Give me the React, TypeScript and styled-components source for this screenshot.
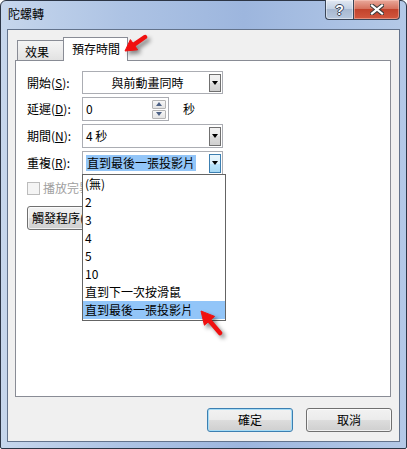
import React from "react";
import styled, { createGlobalStyle, css } from "styled-components";

const FONT = `"Noto Sans CJK TC", "Noto Sans", "Liberation Sans", sans-serif`;

const GlobalStyle = createGlobalStyle`
  html, body { margin: 0; padding: 0; background: #ffffff; }
  body { font-family: ${FONT}; font-size: 12px; color: #000; }
  * { box-sizing: border-box; }
`;

const Window = styled.div`
  position: relative;
  width: 407px;
  height: 449px;
  border: 1px solid #2c3545;
  border-radius: 6px 6px 2px 2px;
  background: linear-gradient(to right, #c6d6ec 0%, #adc3e4 30%, #9db6de 60%, #b4c9e7 100%);
  display: flex;
  flex-direction: column;
  padding: 0 6px 6px;
  font-family: ${FONT};
  font-size: 12px;
`;

const TitleBar = styled.div`
  height: 28px;
  margin: 0 -6px;
  padding: 0 6px 2px 7px;
  display: flex;
  align-items: center;
`;

const TitleText = styled.span`
  line-height: 16px;
  color: #000;
`;

const CaptionButtons = styled.div`
  margin-left: auto;
  align-self: flex-start;
  margin-top: -1px;
  display: flex;
`;

const CaptionButton = styled.div<{ $kind: "help" | "close" }>`
  height: 20px;
  border: 1px solid #3a4658;
  border-top: none;
  display: flex;
  align-items: center;
  justify-content: center;
  ${(p) =>
    p.$kind === "help"
      ? css`
          width: 28px;
          border-radius: 0 0 0 4px;
          border-right: none;
          background: linear-gradient(#e2e9f3 0%, #c3d1e3 45%, #a7b8d0 50%, #b7c8de 100%);
          box-shadow: inset 0 0 0 1px rgba(255, 255, 255, 0.45);
        `
      : css`
          width: 47px;
          border-radius: 0 0 4px 0;
          background: linear-gradient(#e9a99b 0%, #d6735f 45%, #c2432c 50%, #d2573e 100%);
          box-shadow: inset 0 0 0 1px rgba(255, 210, 200, 0.45);
        `}
`;

const HelpGlyph = styled.span`
  font-family: "Liberation Sans", sans-serif;
  font-weight: bold;
  font-size: 14px;
  line-height: 14px;
  color: #fff;
  text-shadow: 1px 0 0 #3a4658, -1px 0 0 #3a4658, 0 1px 0 #3a4658, 0 -1px 0 #3a4658;
`;

const Client = styled.div`
  height: 413px;
  border: 1px solid #63738c;
  background: #f0f0f0;
  padding: 7px 7px 0 7px;
  display: flex;
  flex-direction: column;
`;

const TabStrip = styled.div`
  display: flex;
  align-items: flex-end;
  height: 23px;
  padding-left: 2px;
  position: relative;
  z-index: 2;
`;

const Tab = styled.div<{ $active?: boolean }>`
  border: 1px solid #898c95;
  border-bottom: none;
  padding-left: 7px;
  line-height: 16px;
  display: flex;
  align-items: center;
  ${(p) =>
    p.$active
      ? css`
          width: 65px;
          height: 24px;
          margin-left: -1px;
          margin-bottom: -1px;
          background: #ffffff;
          padding-left: 8px;
          padding-bottom: 2px;
        `
      : css`
          width: 47px;
          height: 20px;
          background: linear-gradient(#f4f4f4 0%, #ececec 50%, #e2e2e2 100%);
          padding-top: 2px;
        `}
`;

const Panel = styled.div`
  position: relative;
  width: 376px;
  height: 337px;
  border: 1px solid #898c95;
  background: #ffffff;
  padding: 10px 0 0 11px;
  display: flex;
  flex-direction: column;
`;

const FormGrid = styled.div`
  display: grid;
  grid-template-columns: 55px auto;
  grid-template-rows: 23px 24px 24px 24px;
  row-gap: 3px;
  align-items: center;
`;

const Label = styled.span`
  line-height: 16px;
  white-space: nowrap;
`;

const Combo = styled.div<{ $center?: boolean }>`
  width: 141px;
  height: 100%;
  border: 1px solid #abadb3;
  background: #fff;
  display: flex;
  align-items: center;
  padding-left: 3px;
`;

const ComboText = styled.span<{ $center?: boolean; $selected?: boolean }>`
  flex: 1;
  line-height: 16px;
  white-space: nowrap;
  ${(p) => p.$center && css`text-align: center;`}
  ${(p) =>
    p.$selected &&
    css`
      flex: 0 0 auto;
      margin-right: auto;
      background: #92c5f8;
      padding: 0 1px;
    `}
`;

const DropButton = styled.div<{ $focused?: boolean }>`
  width: 12px;
  height: calc(100% - 3px);
  margin-right: 1px;
  border: 1px solid ${(p) => (p.$focused ? "#3c7fb1" : "#707070")};
  background: ${(p) =>
    p.$focused
      ? "linear-gradient(#eaf6fd 0%, #d9f0fc 50%, #bee6fd 50%, #a7d9f5 100%)"
      : "linear-gradient(#f2f2f2 0%, #ebebeb 50%, #dddddd 50%, #cfcfcf 100%)"};
  display: flex;
  align-items: center;
  justify-content: center;
`;

const Caret = styled.span<{ $up?: boolean; $color?: string }>`
  width: 0;
  height: 0;
  border-left: 3.5px solid transparent;
  border-right: 3.5px solid transparent;
  ${(p) =>
    p.$up
      ? css`border-bottom: 4px solid ${p.$color || "#000"};`
      : css`border-top: 4px solid ${p.$color || "#000"};`}
`;

const SpinRow = styled.div`
  display: flex;
  align-items: center;
  height: 100%;
`;

const Spinner = styled.div`
  width: 87px;
  height: 100%;
  border: 1px solid #abadb3;
  background: #fff;
  display: flex;
  align-items: center;
  padding-left: 3px;
`;

const SpinButtons = styled.div`
  display: flex;
  flex-direction: column;
  gap: 1px;
  margin-right: 2px;
`;

const SpinButton = styled.div`
  width: 14px;
  height: 9px;
  border: 1px solid #b4b4b4;
  border-radius: 1px;
  background: linear-gradient(#f7f7f7, #e4e4e4);
  display: flex;
  align-items: center;
  justify-content: center;
`;

const Unit = styled.span`
  margin-left: 14px;
  line-height: 16px;
`;

const CheckRow = styled.div`
  margin-top: 5px;
  display: flex;
  align-items: center;
  gap: 3px;
  color: #a0a0a0;
  line-height: 16px;
  white-space: nowrap;
`;

const CheckBox = styled.span`
  width: 13px;
  height: 13px;
  border: 1px solid #bcbcbc;
  background: #f4f4f4;
`;

const PushButton = styled.button<{ $primary?: boolean; $width: number }>`
  width: ${(p) => p.$width}px;
  height: 24px;
  border: 1px solid ${(p) => (p.$primary ? "#3c7fb1" : "#707070")};
  border-radius: 3px;
  background: linear-gradient(#f2f2f2 0%, #ebebeb 50%, #dddddd 50%, #cfcfcf 100%);
  box-shadow: inset 0 0 0 1px ${(p) => (p.$primary ? "#a6dcf6" : "rgba(255,255,255,0.7)")};
  font-family: ${FONT};
  font-size: 12px;
  line-height: 16px;
  color: #000;
  padding: 0;
  margin: 0;
`;

const TriggerButton = styled(PushButton)`
  margin-top: 10px;
  text-align: left;
  padding-left: 4px;
  white-space: nowrap;
`;

const DropList = styled.div`
  position: absolute;
  left: 66px;
  top: 113px;
  width: 144px;
  height: 147px;
  border: 1px solid #646464;
  background: #fff;
  z-index: 5;
`;

const ListItem = styled.div<{ $selected?: boolean }>`
  height: 18px;
  line-height: 18px;
  padding-left: 2px;
  white-space: nowrap;
  background: ${(p) => (p.$selected ? "#92c5f8" : "transparent")};
`;

const ButtonRow = styled.div`
  margin-top: 11px;
  display: flex;
  justify-content: flex-end;
  gap: 13px;
`;

const ArrowMark = styled.svg<{ $left: number; $top: number }>`
  position: absolute;
  left: ${(p) => p.$left}px;
  top: ${(p) => p.$top}px;
  overflow: visible;
  filter: drop-shadow(3px 3px 2px rgba(0, 0, 0, 0.45));
  z-index: 10;
`;

const items = ["(無)", "2", "3", "4", "5", "10", "直到下一次按滑鼠", "直到最後一張投影片"];

export default function App() {
  return (
    <>
      <GlobalStyle />
      <Window>
        <TitleBar>
          <TitleText>陀螺轉</TitleText>
          <CaptionButtons>
            <CaptionButton $kind="help">
              <HelpGlyph>?</HelpGlyph>
            </CaptionButton>
            <CaptionButton $kind="close">
              <svg width="14" height="11" viewBox="0 0 14 11">
                <path d="M2 1.5 L12 9.5 M12 1.5 L2 9.5" stroke="#3a3a3a" strokeWidth="4.2" strokeLinecap="square" />
                <path d="M2 1.5 L12 9.5 M12 1.5 L2 9.5" stroke="#ffffff" strokeWidth="2.2" strokeLinecap="square" />
              </svg>
            </CaptionButton>
          </CaptionButtons>
        </TitleBar>
        <Client>
          <TabStrip>
            <Tab>效果</Tab>
            <Tab $active>預存時間</Tab>
          </TabStrip>
          <Panel>
            <FormGrid>
              <Label>
                開始(<u>S</u>):
              </Label>
              <Combo>
                <ComboText $center>與前動畫同時</ComboText>
                <DropButton>
                  <Caret />
                </DropButton>
              </Combo>
              <Label>
                延遲(<u>D</u>):
              </Label>
              <SpinRow>
                <Spinner>
                  <ComboText>0</ComboText>
                  <SpinButtons>
                    <SpinButton>
                      <Caret $up $color="#4d6185" />
                    </SpinButton>
                    <SpinButton>
                      <Caret $color="#4d6185" />
                    </SpinButton>
                  </SpinButtons>
                </Spinner>
                <Unit>秒</Unit>
              </SpinRow>
              <Label>
                期間(<u>N</u>):
              </Label>
              <Combo>
                <ComboText>4 秒</ComboText>
                <DropButton>
                  <Caret />
                </DropButton>
              </Combo>
              <Label>
                重複(<u>R</u>):
              </Label>
              <Combo>
                <ComboText $selected>直到最後一張投影片</ComboText>
                <DropButton $focused>
                  <Caret />
                </DropButton>
              </Combo>
            </FormGrid>
            <CheckRow>
              <CheckBox />
              <span>播放完畢後倒帶(W)</span>
            </CheckRow>
            <TriggerButton $width={100}>觸發程序(T)</TriggerButton>
            <DropList>
              {items.map((t, i) => (
                <ListItem key={t} $selected={i === items.length - 1}>
                  {t}
                </ListItem>
              ))}
            </DropList>
          </Panel>
          <ButtonRow>
            <PushButton $primary $width={86}>
              確定
            </PushButton>
            <PushButton $width={86}>取消</PushButton>
          </ButtonRow>
        </Client>
        <ArrowMark $left={117} $top={29} width="36" height="30" viewBox="0 0 36 30">
          <path d="M27 7 L16 14.7" stroke="#f01010" strokeWidth="4.5" strokeLinecap="round" />
          <path d="M7 21 L19.6 19.8 L12.4 9.6 Z" fill="#f01010" stroke="#f01010" strokeWidth="1" strokeLinejoin="round" />
        </ArrowMark>
        <ArrowMark $left={195} $top={304} width="36" height="36" viewBox="0 0 36 36">
          <path d="M24 28 L13.5 15.8" stroke="#f01010" strokeWidth="4.5" strokeLinecap="round" />
          <path d="M5 6 L18.6 11.4 L8.4 20.2 Z" fill="#f01010" stroke="#f01010" strokeWidth="1" strokeLinejoin="round" />
        </ArrowMark>
      </Window>
    </>
  );
}
